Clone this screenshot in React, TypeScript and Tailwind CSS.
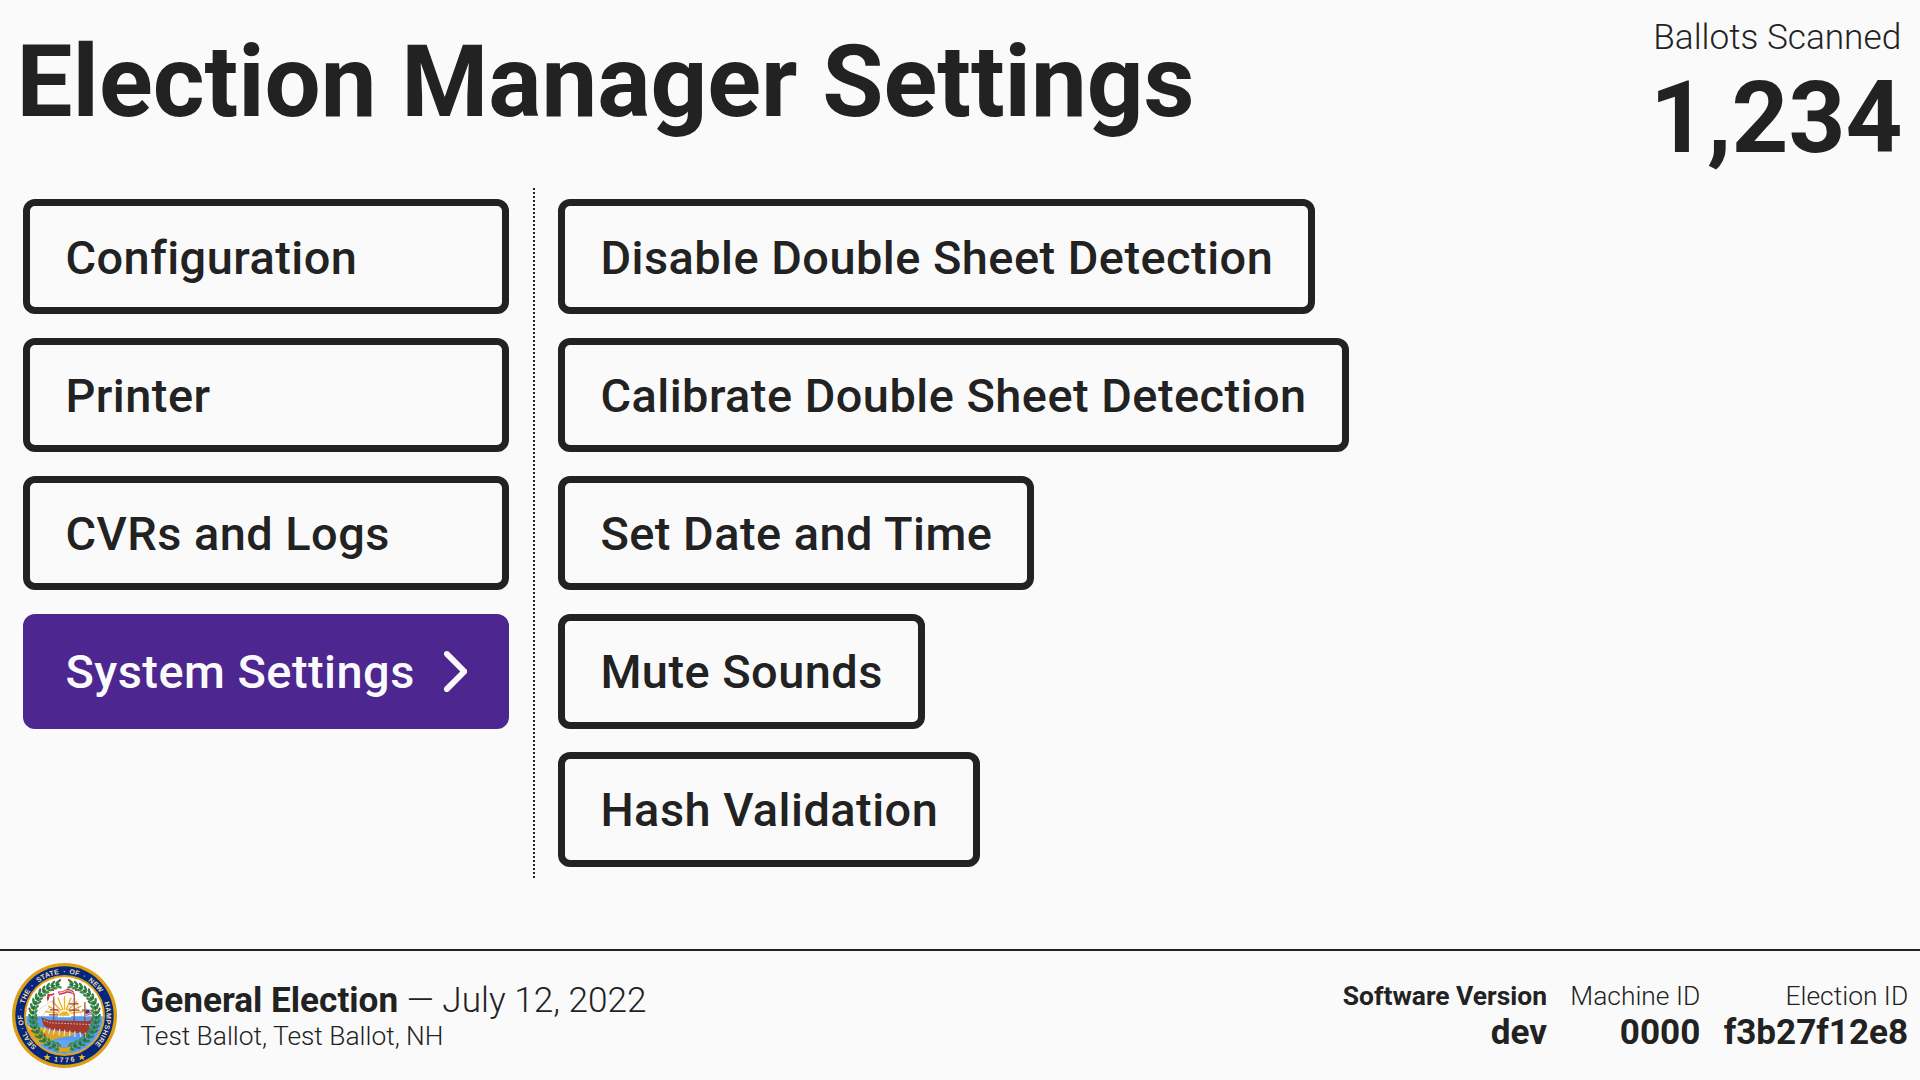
import type { ReactNode } from 'react';

const menu = ['Configuration', 'Printer', 'CVRs and Logs', 'System Settings'];
const actions = [
  'Disable Double Sheet Detection',
  'Calibrate Double Sheet Detection',
  'Set Date and Time',
  'Mute Sounds',
  'Hash Validation',
];

function Button({ children, selected = false }: { children: ReactNode; selected?: boolean }) {
  return (
    <button
      className={
        'flex h-[114.6px] shrink-0 items-center justify-between rounded-[12px] border-[7px] px-[35px] pt-[2.95px] text-[46.91px] leading-none font-medium tracking-[0.01em] whitespace-nowrap ' +
        (selected ? 'border-[#4d2690] bg-[#4d2690] text-[#fafafa]' : 'border-[#222222] text-[#222222]')
      }
    >
      {children}
    </button>
  );
}

function Chevron() {
  return (
    <svg viewBox="0 0 320 512" className="-mt-[2.95px] h-[46.93px] w-[29.33px]" fill="currentColor">
      <path d="M310.6 233.4c12.5 12.5 12.5 32.8 0 45.3l-192 192c-12.5 12.5-32.8 12.5-45.3 0s-12.5-32.8 0-45.3L242.7 256 73.4 86.6c-12.5-12.5-12.5-32.8 0-45.3s32.8-12.5 45.3 0l192 192z" />
    </svg>
  );
}

const motto: [string, number][] = [
  ['SEAL', -125],
  ['·', -107],
  ['OF', -96],
  ['·', -82],
  ['THE', -64],
  ['·', -47],
  ['STATE', -23],
  ['·', 0],
  ['OF', 13],
  ['·', 27],
  ['NEW', 46],
  ['HAMPSHIRE', 103],
];

const leafAngles = [10, 19, 28, 37, 46, 55, 64, 73, 82, 91, 100, 109, 118, 128, 138, 148, 158, 167];

function Branch() {
  return (
    <g>
      <path d="M14-93A94 94 0 0 1 24 91" fill="none" stroke="#3d7a3d" strokeWidth="2" />
      {leafAngles.map((a, i) => (
        <g key={a} transform={`rotate(${a}) translate(0 -95)`}>
          <ellipse cx="-2" cy="-7" rx="10" ry="4" fill="#2f8443" transform="rotate(32)" />
          <ellipse cx="-2" cy="7" rx="10" ry="4" fill="#3b8f4c" transform="rotate(-32)" />
          <ellipse cx="4" cy="0" rx="6" ry="3" fill="#256d38" />
          {i % 2 === 0 && <circle cx="-6" cy={i % 4 ? 12 : -12} r="2.8" fill="#c41f3a" />}
        </g>
      ))}
    </g>
  );
}

function Seal() {
  return (
    <svg viewBox="-157 -157 314 314" className="size-[105px] shrink-0">
      <defs>
        <path id="outer" d="M0 125A125 125 0 0 1 0-125A125 125 0 0 1 0 125" />
        <path id="lower" d="M-140 0A140 140 0 0 0 140 0" />
        <clipPath id="disk">
          <circle r="115" />
        </clipPath>
      </defs>
      <circle r="157" fill="#dd9f10" />
      <circle r="147" fill="#04267f" />
      <circle r="121" fill="#dd9f10" />
      <circle r="115" fill="#fff" />
      <g clipPath="url(#disk)">
        <path d="M-115 2H115V120H-115Z" fill="#559bef" />
        <path d="M-115 37C-80 30-60 36-45 44L20 50C50 58 10 62-20 68S-10 84-50 82L-80 90L-115 60Z" fill="#e0a32a" />
        <path d="M-115 30L-60 38L-100 44Z" fill="#f0bd4c" />
        <path d="M-60 80Q0 66 60 82Q30 108-10 104Q-40 100-60 80Z" fill="#62a6f5" />
        <g stroke="#f1b01c" strokeWidth="4">
          <path d="M0-5L0-58M0-5L-20-54M0-5L20-54M0-5L-38-43M0-5L38-43M0-5L-50-28M0-5L50-28M0-5L-58-12M0-5L58-12" />
        </g>
        <path d="M-18 3A18 18 0 0 1 18 3Z" fill="#f4b41e" stroke="#fff" strokeWidth="4" />
        <g stroke="#aa8888" strokeWidth="1" fill="none">
          <path d="M-32-48L-90-8M-32-40L-72 8M-32-48L-8 14M30-52L-10 14M30-52L56 14M60-30L84 14" />
        </g>
        <g stroke="#974438" strokeWidth="3.5">
          <path d="M-32 18V-57M29 18V-66M61 18V-40M-44-17H-18M-46-2H-18M14-35H42M14-16H44M52-16H70" />
        </g>
        <path d="M-70 5L-46 14L70 17L84 11L74 32L71 56L-42 42L-62 31Z" fill="#a3382f" />
        <path d="M-62 14L-44 22L76 27" fill="none" stroke="#e7c8bd" strokeWidth="2.5" strokeDasharray="5 4" />
        <path d="M-57 36L-62 50M-43 38L-48 54M-29 39L-34 56M-14 41L-17 59M1 43L-1 61M16 45L15 62M31 47L31 64M46 49L49 64M61 51L65 64" stroke="#f4e3cf" strokeWidth="3.5" />
        <path d="M-31-68Q-40-62-50-66L-52-58Q-54-48-50-41Q-46-50-44-59Q-36-58-31-62Z" fill="#d03449" />
        <path d="M28-72Q10-86 2-76Q-10-70-20-72L-16-61Q0-64 8-68Q18-68 28-62Z" fill="#d03449" />
        <path d="M-16-67Q0-70 6-74Q18-76 26-67" fill="none" stroke="#fff" strokeWidth="2.5" />
        <path d="M62-15L84-21V-2L62 4Z" fill="#e8dfe8" />
        <path d="M62 0L84-6M62-5L84-11M72-13L84-16" stroke="#c92a43" strokeWidth="2.4" />
        <path d="M62-15L74-18V-8L62-5Z" fill="#233f8c" />
      </g>
      <Branch />
      <g transform="scale(-1 1)">
        <Branch />
      </g>
      <path d="M-20 90L-8 96H8L20 90L15 104L20 112L6 109H-6L-20 112L-15 104Z" fill="#dfa520" stroke="#a8780d" />
      <g fill="#ecdca0" className="font-['Liberation_Sans',sans-serif] text-[21px] font-bold" textAnchor="middle">
        {motto.map(([word, angle]) => (
          <text key={angle} className={word === 'HAMPSHIRE' ? 'tracking-[0.06em]' : 'tracking-[0.03em]'}>
            <textPath href="#outer" startOffset={`${((angle + 180) / 360) * 100}%`}>
              {word}
            </textPath>
          </text>
        ))}
        <text className="tracking-[0.26em]">
          <textPath href="#lower" startOffset="50.5%">
            1776
          </textPath>
        </text>
      </g>
      <g fill="#f0b92a">
        <path id="star" d="M-52 113L-49.500 121L-41 121.500L-47.500 126.500L-45 134L-52 129.500L-59 134L-56.500 126.500L-63 121.500L-54.500 121Z" />
        <use href="#star" transform="scale(-1 1)" />
      </g>
    </svg>
  );
}

function Info({ label, value, strong = false }: { label: string; value: string; strong?: boolean }) {
  return (
    <div className="text-right">
      <div className={'text-[26.4px] leading-[32px] ' + (strong ? 'font-bold' : 'font-light')}>{label}</div>
      <div className="text-[35.1px] leading-[40px] font-bold">{value}</div>
    </div>
  );
}

export default function App() {
  return (
    <div className="flex h-[1080px] w-[1920px] flex-col overflow-hidden bg-[#fafafa] font-['Roboto',sans-serif] text-[#222222]">
      <header className="flex h-[187.7px] shrink-0 justify-between px-[17.6px] pt-4">
        <h1 className="mt-[7px] -ml-[1px] text-[99.5px] leading-[119px] font-bold">Election Manager Settings</h1>
        <div className="text-right">
          <div className="pr-[1.2px] text-[35.2px] leading-[42px] font-light">Ballots Scanned</div>
          <div className="mt-px text-[99.3px] leading-[119px] font-bold">1,234</div>
        </div>
      </header>
      <main className="flex flex-1 items-start pl-[23.4px]">
        <nav className="flex w-[486px] flex-col gap-[23.6px] pt-[11.7px]">
          {menu.map((name) => (
            <Button key={name} selected={name === 'System Settings'}>
              {name}
              {name === 'System Settings' && <Chevron />}
            </Button>
          ))}
        </nav>
        <div className="ml-[23.6px] flex h-[690.5px] flex-col items-start gap-[23.6px] border-l-2 border-dotted border-[#222222] pt-[11.7px] pl-[23.4px]">
          {actions.map((name) => (
            <Button key={name}>{name}</Button>
          ))}
        </div>
      </main>
      <footer className="flex h-[131px] shrink-0 items-center justify-between border-t-2 border-[#222222] px-[11.8px]">
        <div className="flex items-center gap-[23.5px]">
          <Seal />
          <div>
            <div className="text-[35.15px] leading-[40px]">
              <span className="font-bold">General Election</span>
              <span className="font-light"> — July 12, 2022</span>
            </div>
            <div className="text-[26.35px] leading-[32px] font-light">Test Ballot, Test Ballot, NH</div>
          </div>
        </div>
        <div className="flex gap-[23.4px]">
          <Info label="Software Version" value="dev" strong />
          <Info label="Machine ID" value="0000" />
          <Info label="Election ID" value="f3b27f12e8" />
        </div>
      </footer>
    </div>
  );
}
